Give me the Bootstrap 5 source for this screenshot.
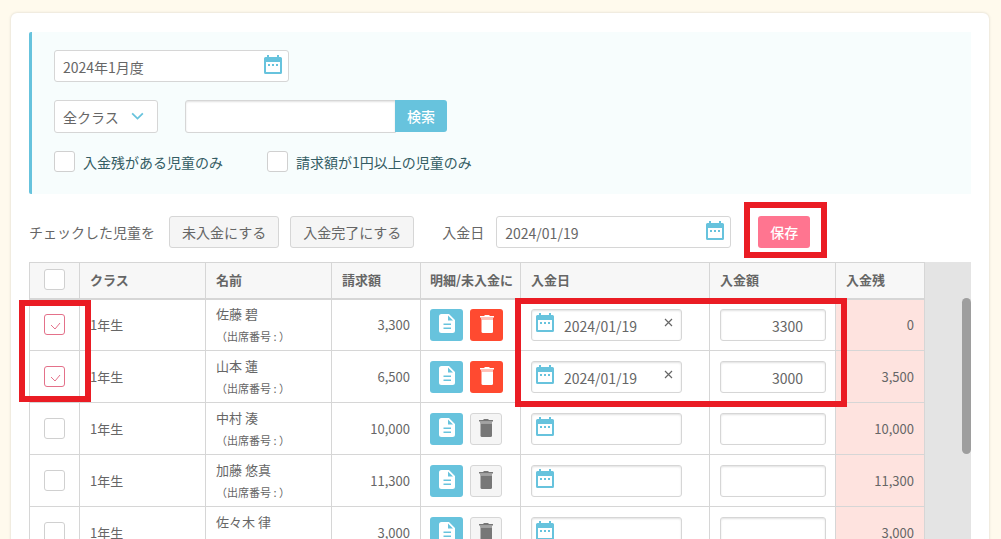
<!DOCTYPE html>
<html lang="ja">
<head>
<meta charset="utf-8">
<meta name="viewport" content="width=device-width, initial-scale=1">
<title>入金管理</title>
<link rel="stylesheet" href="https://cdn.jsdelivr.net/npm/bootstrap@5.3.0/dist/css/bootstrap.min.css">
<style>
  :root { --sky:#67c3dd; --line:#d6d6d6; --ink:#666; --pink:#ff7590; --marker:#ea1c24; }
  body { height:100vh; overflow:hidden; background:#fffaed; color:var(--ink); font:14px/20px "Noto Sans CJK JP","Noto Sans",sans-serif; }
  .sheet { margin:13px 12px 0 11px; padding:19px 18px; background:#fff; border-radius:6px; box-shadow:0 0 3px rgba(0,0,0,.16); min-height:calc(100vh + 40px); }
  .filters { background:#f7fdfd; border-left:3px solid var(--sky); border-radius:2px 0 0 2px; padding:18px 22px; height:162px; color:#335c63; gap:18px; }
  .form-control, .form-select { font-size:14px; line-height:20px; color:var(--ink); border:1px solid var(--line); border-radius:3px; padding:6px 8px 4px; height:32px; }
  .form-select { background-image:url("data:image/svg+xml,%3Csvg xmlns='http://www.w3.org/2000/svg' viewBox='0 0 14 10'%3E%3Cpath d='M2 2l5 5 5-5' fill='none' stroke='%2367c3dd' stroke-width='1.6'/%3E%3C/svg%3E"); background-size:15px 11px; background-position:right 12px center; width:104px; }
  .form-select.tall { padding-top:5px; padding-bottom:5px; }
  .tall { height:33px; }
  .inset { box-shadow:inset 0 1px 2px rgba(0,0,0,.12); }
  .datebox { width:235px; }
  .datebox svg { right:7px; top:5px; }
  .find { width:262px; margin-left:27px; }
  .btn { font-size:14px; line-height:20px; border-radius:3px; height:32px; padding:5px 12px; white-space:nowrap; }
  .btn-sky { background:var(--sky); color:#fff; font-weight:500; }
  .find .btn { padding:5px 11px; }
  .btn-pink { background:var(--pink); color:#fff; font-weight:500; width:52px; padding:5px 0; }
  .btn-plain { background:#f5f5f5; border-color:var(--line); color:var(--ink); }
  .tick { width:21px; height:21px; margin:0; border:1px solid #d0d0d0; flex:none; }
  .form-check-input.tick { border-radius:3px; }
  .tick:checked { background-color:#fff; border-color:#e4718a; background-size:19px; background-image:url("data:image/svg+xml,%3Csvg xmlns='http://www.w3.org/2000/svg' viewBox='0 0 19 19'%3E%3Cpath d='M6 10l4 4 5-6' fill='none' stroke='%23e4718a'/%3E%3C/svg%3E") !important; }
  .toolbar { margin-top:22px; }
  .lead-label { width:140px; }
  .btn-plain + .btn-plain { margin-left:11px; }
  .date-label { width:54px; margin-left:28px; }
  .save { margin-left:27px; }
  .gridwrap { background:#e4e4e4; margin-top:14px; }
  .grid { width:896px; table-layout:fixed; border-collapse:collapse; background:#fff; font-size:13px; }
  .grid th, .grid td { border:1px solid var(--line); padding:0 10px; }
  .grid th { height:36px; background:#f7f7f7; border-bottom-width:2px; white-space:nowrap; padding-bottom:1px; }
  .grid td { height:52px; }
  .grid th:nth-child(5), .grid td:nth-child(5) { padding:0 9px; }
  .grid td.owed { background:#fee3df; }
  .person { line-height:22px; }
  .person span { font-size:11px; }
  .acts { gap:7px; }
  .act { width:33px; padding:0 0 2px; }
  .act svg { display:block; margin:auto; }
  .act-red { background:#ff4a30; color:#fff; }
  .act-off { width:32px; background:#f5f5f5; border-color:var(--line); color:#777; }
  .day { width:151px; }
  .day .form-control { padding-left:32px; padding-right:24px; }
  .day svg { left:5px; top:4px; }
  .wipe { right:9px; top:9px; width:9px; height:9px; padding:0; border:0; background:none; color:#666; display:flex; }
  .day .wipe svg { position:static; }
  .sum { width:106px; padding-right:22px; text-align:right; }
  .thumb { width:9px; height:156px; margin-top:36px; border-radius:5px; background:#9e9e9e; }
  .mark-box { border:6px solid var(--marker); pointer-events:none; z-index:2; }
  .mark-save { inset:-14px -17px -10px -14px; }
  .mark-ticks { left:-10px; top:38px; width:72px; height:102px; }
  .mark-inputs { left:486px; top:36px; width:332px; height:109px; }
</style>
</head>
<body>
<svg class="d-none" aria-hidden="true">
  <symbol id="cal" viewBox="0 0 18 20"><path fill="#67c3dd" fill-rule="evenodd" d="M3 0h2v2h8V0h2v2h1.500a1.500 1.500 0 0 1 1.500 1.500v14a1.500 1.500 0 0 1-1.500 1.500h-15A1.500 1.500 0 0 1 0 17.500v-14A1.500 1.500 0 0 1 1.500 2H3zM2 7v10h14V7zM4 9h2v2H4zM8 9h2v2H8zM12 9h2v2h-2z"/></symbol>
  <symbol id="doc" viewBox="0 0 16 20"><path fill="#fff" fill-rule="evenodd" d="M2.500 0H10l6 6v10.500a2.500 2.500 0 0 1-2.500 2.500h-11A2.500 2.500 0 0 1 0 16.500v-14A2.500 2.500 0 0 1 2.500 0zM9 1.500V6.500h5zM4.500 9.500v1.500h7.500v-1.500zM4.500 13.500v1.500h7.500v-1.500z"/></symbol>
  <symbol id="bin" viewBox="0 0 14 18"><path fill="currentColor" d="M1.500 4.500h11.500v12a1.500 1.500 0 0 1-1.500 1.500h-8.500a1.500 1.500 0 0 1-1.500-1.500z"/><path fill="currentColor" opacity=".65" d="M1 2.500h12v2H1z"/><path fill="currentColor" d="M0 1h4l1-1h4l1 1h4v1.500H0z"/></symbol>
</svg>
<main class="sheet">
  <form class="filters d-flex flex-column align-items-start">
    <div class="datebox position-relative">
      <input class="form-control" value="2024年1月度" aria-label="対象月">
      <svg class="position-absolute" width="18" height="20"><use href="#cal"/></svg>
    </div>
    <div class="d-flex">
      <select class="form-select tall" aria-label="クラス"><option>全クラス</option></select>
      <div class="input-group find flex-nowrap">
        <input class="form-control tall inset" aria-label="検索語">
        <button type="button" class="btn btn-sky tall">検索</button>
      </div>
    </div>
    <div class="d-flex">
      <div class="d-flex align-items-center gap-2 me-4 pe-3"><input class="form-check-input tick" type="checkbox" id="rest"><label for="rest">入金残がある児童のみ</label></div>
      <div class="d-flex align-items-center gap-2 ms-1"><input class="form-check-input tick" type="checkbox" id="over"><label for="over">請求額が1円以上の児童のみ</label></div>
    </div>
  </form>

  <div class="toolbar d-flex align-items-center">
    <span class="lead-label">チェックした児童を</span>
    <button type="button" class="btn btn-plain">未入金にする</button>
    <button type="button" class="btn btn-plain">入金完了にする</button>
    <label class="date-label" for="payday">入金日</label>
    <div class="datebox position-relative">
      <input class="form-control" id="payday" value="2024/01/19">
      <svg class="position-absolute" width="18" height="20"><use href="#cal"/></svg>
    </div>
    <div class="save position-relative">
      <button type="button" class="btn btn-pink">保存</button>
      <span class="mark-box mark-save position-absolute"></span>
    </div>
  </div>

  <div class="gridwrap position-relative d-flex justify-content-between align-items-start">
    <table class="grid">
      <colgroup><col style="width:50px"><col style="width:126px"><col style="width:126px"><col style="width:89px"><col style="width:100px"><col style="width:189px"><col style="width:126px"><col style="width:89px"></colgroup>
      <thead><tr>
        <th><input class="form-check-input tick d-block mx-auto" type="checkbox" aria-label="すべて選択"></th>
        <th>クラス</th><th>名前</th><th>請求額</th><th>明細/未入金に</th><th>入金日</th><th>入金額</th><th>入金残</th>
      </tr></thead>
      <tbody id="rows"></tbody>
    </table>
    <div class="thumb"></div>
    <span class="mark-box mark-ticks position-absolute"></span>
    <span class="mark-box mark-inputs position-absolute"></span>
  </div>
</main>
<script src="https://cdn.jsdelivr.net/npm/bootstrap@5.3.0/dist/js/bootstrap.bundle.min.js"></script>
<script>
  const children = [
    ['佐藤 碧', '3,300', '3300', '0'],
    ['山本 蓮', '6,500', '3000', '3,500'],
    ['中村 湊', '10,000', '', '10,000'],
    ['加藤 悠真', '11,300', '', '11,300'],
    ['佐々木 律', '3,000', '', '3,000']
  ];
  document.getElementById('rows').innerHTML = children.map(([name, bill, paid, rest]) => `
    <tr>
      <td><input class="form-check-input tick d-block mx-auto" type="checkbox" aria-label="${name}" ${paid ? 'checked' : ''}></td>
      <td>1年生</td>
      <td><div class="person">${name}<br><span>（出席番号 : ）</span></div></td>
      <td class="text-end">${bill}</td>
      <td><div class="acts d-flex">
        <button type="button" class="btn btn-sky act" aria-label="明細"><svg width="16" height="20"><use href="#doc"/></svg></button>
        <button type="button" class="btn act ${paid ? 'act-red' : 'act-off'}" aria-label="未入金に"><svg width="14" height="18"><use href="#bin"/></svg></button>
      </div></td>
      <td><div class="day position-relative">
        <input class="form-control inset" aria-label="入金日" value="${paid ? '2024/01/19' : ''}">
        <svg class="position-absolute" width="18" height="20"><use href="#cal"/></svg>
        ${paid ? '<button type="button" class="wipe position-absolute" aria-label="消去"><svg width="9" height="9" viewBox="0 0 9 9"><path d="M1 1l7 7M8 1l-7 7" stroke="currentColor" stroke-width="1.2"/></svg></button>' : ''}
      </div></td>
      <td><input class="form-control inset sum" aria-label="入金額" value="${paid}"></td>
      <td class="text-end owed">${rest}</td>
    </tr>`).join('');
</script>
</body>
</html>
